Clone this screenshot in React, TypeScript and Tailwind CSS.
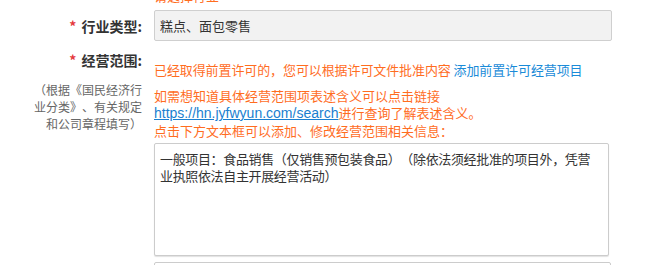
import React from 'react'

const cjk = { fontFamily: '"Noto Sans CJK SC", "Noto Sans", sans-serif' }

function Label({ text }: { text: string }) {
  return (
    <div className="text-right text-[14px] leading-[20px] font-bold text-[#333]">
      <span className="text-[#e4393c] mr-[5px]">*</span>
      {text}:
    </div>
  )
}

export default function App() {
  return (
    <div className="w-[660px] h-[265px] overflow-hidden bg-white [text-spacing-trim:space-all]" style={cjk}>
      {/* tail of the previous field's hint, cut off by the viewport */}
      <div className="h-[10px] overflow-hidden pl-[154px]">
        <div className="-mt-[13px] text-[13px] leading-[17px] text-[#ff6d1f]">请选择行业</div>
      </div>

      <div className="flex items-center">
        <div className="w-[142px]">
          <Label text="行业类型" />
        </div>
        <div className="ml-[12px] w-[458px] h-[31px] flex items-center px-[5px] bg-[#f2f2f2] border border-[#cfcfcf] rounded-[2px] text-[13px] text-[#333]">
          糕点、面包零售
        </div>
      </div>

      <div className="flex mt-[9px]">
        <div className="w-[142px] flex flex-col items-end">
          <Label text="经营范围" />
          <div className="mt-[11px] w-[110px] text-right text-[12px] leading-[17px] text-[#666]">
            （根据《国民经济行<br />业分类》、有关规定<br />和公司章程填写）
          </div>
        </div>

        <div className="ml-[12px] pt-[11px] w-[458px] text-[13px] leading-[17px] text-[#ff6d1f]">
          <div className="tracking-[-0.1px]">
            已经取得前置许可的，您可以根据许可文件批准内容{' '}
            <a className="text-[#1a8bd8] cursor-pointer">添加前置许可经营项目</a>
          </div>
          <div className="mt-[9px]">
            <div>如需想知道具体经营范围项表述含义可以点击链接</div>
            <div>
              <a
                className="text-[#1a7fd0] underline text-[14px]"
                style={{ fontFamily: '"Liberation Sans", Arial, sans-serif' }}
              >
                https://hn.jyfwyun.com/search
              </a>
              进行查询了解表述含义。
            </div>
            <div>点击下方文本框可以添加、修改经营范围相关信息：</div>
          </div>

          <div className="mt-[4px] w-[455px] h-[113px] border border-[#cccccc] rounded-[2px] shadow-[0_1px_1px_rgba(0,0,0,0.12)] px-[5px] py-[6px] text-[13px] leading-[17px] tracking-[-0.35px] text-[#333] bg-white">
            一般项目：食品销售（仅销售预包装食品）（除依法须经批准的项目外，凭营<br />
            业执照依法自主开展经营活动）
          </div>

          <div className="mt-[6px] w-[457px] h-[30px] border border-[#cccccc] rounded-[2px] bg-white" />
        </div>
      </div>
    </div>
  )
}
